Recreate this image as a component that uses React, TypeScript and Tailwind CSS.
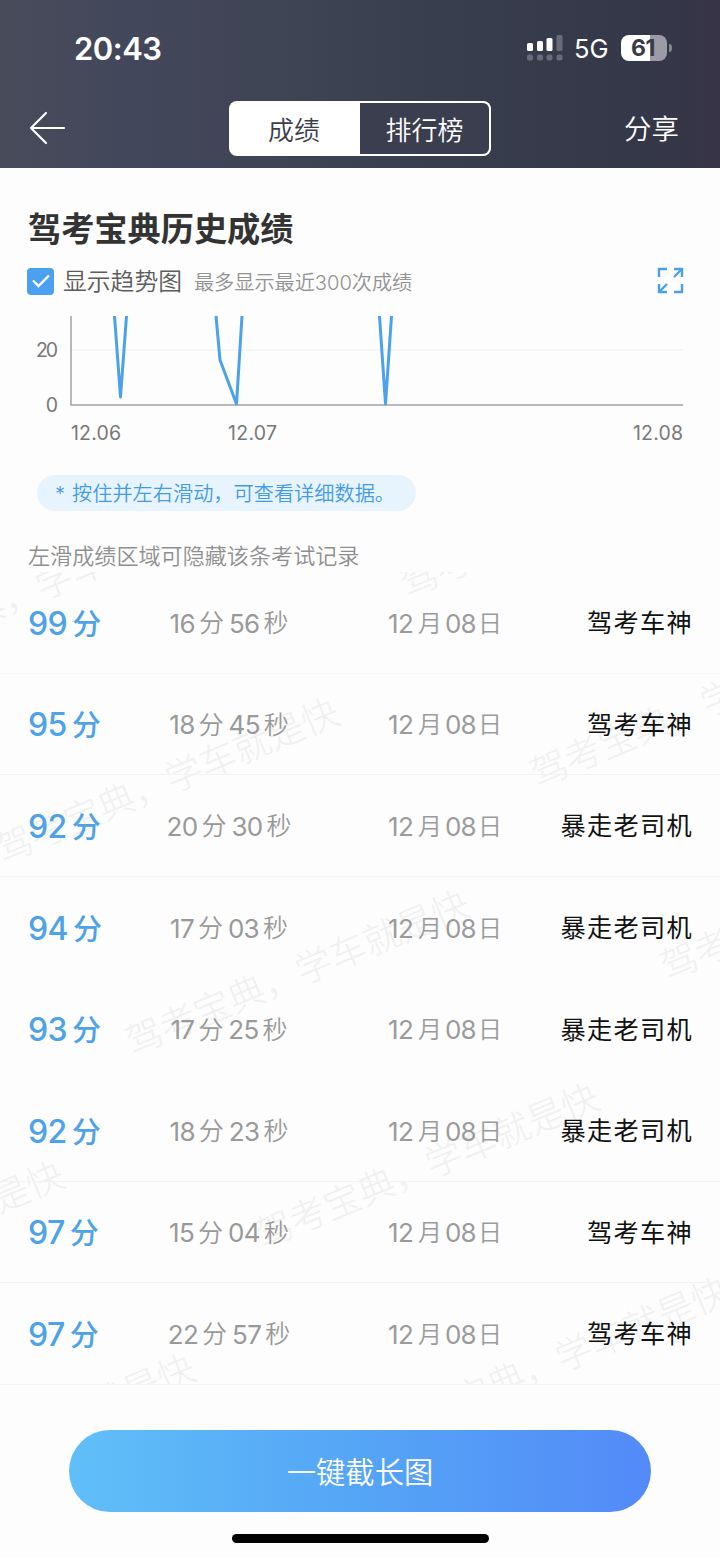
import React from "react";

const FONT = "font-[Inter,'Noto_Sans_CJK_SC',sans-serif]";

type Record = { score: string; min: string; sec: string; title: string; line: string };

const records: Record[] = [
  { score: "99", min: "16", sec: "56", title: "驾考车神", line: "border-[#f9f9f9]" },
  { score: "95", min: "18", sec: "45", title: "驾考车神", line: "border-[#f3f3f3]" },
  { score: "92", min: "20", sec: "30", title: "暴走老司机", line: "border-[#f3f3f3]" },
  { score: "94", min: "17", sec: "03", title: "暴走老司机", line: "border-transparent" },
  { score: "93", min: "17", sec: "25", title: "暴走老司机", line: "border-transparent" },
  { score: "92", min: "18", sec: "23", title: "暴走老司机", line: "border-[#f3f3f3]" },
  { score: "97", min: "15", sec: "04", title: "驾考车神", line: "border-[#f3f3f3]" },
  { score: "97", min: "22", sec: "57", title: "驾考车神", line: "border-[#f3f3f3]" },
];

// Centre of the first glyph of each watermark, relative to the list.
const watermarks = [
  { x: -116, y: 80 },
  { x: 14, y: 273 },
  { x: 144, y: 465 },
  { x: 274, y: 658 },
  { x: 404, y: 852 },
  { x: 419, y: 7 },
  { x: 549, y: 197 },
  { x: 679, y: 390 },
  { x: -261, y: 736 },
  { x: -130, y: 929 },
];

function StatusBar() {
  return (
    <div className="flex h-[96px] items-center justify-between pl-[74px] pr-[48px]">
      <div className="text-[31px] font-semibold leading-none tracking-[-0.5px]">20:43</div>
      <div className="flex items-center">
        <svg width="37" height="27" viewBox="0 0 37 27" fill="#fff">
          <rect x="1" y="8" width="6" height="8" rx="1.5" />
          <rect x="11" y="6" width="6" height="10" rx="1.5" />
          <rect x="20.5" y="3" width="6" height="13" rx="1.5" />
          <g opacity=".25">
            <rect x="30.500" y="0" width="6" height="16" rx="1.5" />
            <rect x="1" y="19.500" width="6" height="6" rx="2" />
            <rect x="11" y="19.500" width="6" height="6" rx="2" />
            <rect x="20.500" y="19.500" width="6" height="6" rx="2" />
            <rect x="30.500" y="19.500" width="6" height="6" rx="2" />
          </g>
        </svg>
        <span className="ml-[11px] w-[47px] pt-[2px] text-[25.500px] leading-none">5G</span>
        <div className="flex h-[26px] w-[46px] items-center justify-center rounded-[8px] bg-[linear-gradient(90deg,#fff_62%,#9c9aa6_62%)] pr-[2px] text-[23px] font-bold leading-none tracking-[-0.5px] text-[#373a49]">
          61
        </div>
        <div className="ml-[2px] h-[8px] w-[3px] rounded-r-full bg-[#85858f]" />
      </div>
    </div>
  );
}

function Header() {
  return (
    <header className="h-[168px] bg-[linear-gradient(90deg,#474b5a_0%,#43475b_18%,#3f4454_40%,#383d4d_65%,#343849_88%,#383448_100%)] text-white">
      <StatusBar />
      <div className="flex h-[65px] items-center pl-[29px] pr-[41px]">
        <svg className="-mt-[2px]" width="38" height="34" viewBox="0 0 38 34" fill="none" stroke="#fff" strokeWidth="2.2" strokeLinecap="round" strokeLinejoin="round">
          <path d="M17 2 L2 17 L17 32 M2 17 H35" />
        </svg>
        <div className="ml-[162px] flex h-[55px] w-[262px] overflow-hidden rounded-[8px] bg-white text-[26px] font-[350]">
          <div className="flex w-[131px] items-center justify-center pr-px pt-[3px] text-[#3c3e4a]">成绩</div>
          <div className="flex flex-1 items-center justify-center rounded-r-[8px] border-y-2 border-r-2 border-white bg-[#3a3e4e] pt-[3px]">排行榜</div>
        </div>
        <div className="ml-auto pt-[3px] text-[27.500px] font-[350] leading-none">分享</div>
      </div>
    </header>
  );
}

function Chart() {
  return (
    <svg className="block" width="720" height="142" viewBox="0 308 720 142" fill="none">
      <path d="M71 350H683" stroke="#f3f3f3" strokeWidth="1.500" />
      <path d="M71 316V405H683" stroke="#a2a2a2" strokeWidth="1.500" />
      <g stroke="#4ba1ea" strokeWidth="3" strokeLinejoin="round">
        <path d="M114.500 316L120.500 397L126.500 316" />
        <path d="M216 316L220 360L236.500 404L242 316" />
        <path d="M379.500 316L385.500 404L391.500 316" />
      </g>
      <g fill="#787878" fontSize="19.500">
        <text x="58" y="356.500" textAnchor="end" textLength="22">20</text>
        <text x="58" y="411.500" textAnchor="end" textLength="11.500">0</text>
        <text x="71" y="440" textLength="50">12.06</text>
        <text x="228" y="440" textLength="49">12.07</text>
        <text x="633" y="440" textLength="50">12.08</text>
      </g>
    </svg>
  );
}

function Row({ r }: { r: Record }) {
  return (
    <div className={`flex h-[101.6px] items-center border-b pl-[28px] pr-[29px] pt-[3px] ${r.line}`}>
      <div className="flex w-[110px] items-center text-[#4ea2e8]">
        <span className="text-[32px] font-medium leading-none tracking-[-0.6px]">{r.score}</span>
        <span className="ml-[5px] pt-px text-[29px] font-medium leading-none">分</span>
      </div>
      <div className="flex w-[182px] items-center justify-center text-[26px] leading-none text-[#999]">
        <span className="tracking-[-0.7px]">{r.min}</span>
        <span className="ml-[4px] mr-[5px] text-[25px] font-[350]">分</span>
        <span className="tracking-[-0.7px]">{r.sec}</span>
        <span className="ml-[4px] text-[25px] font-[350]">秒</span>
      </div>
      <div className="ml-[68px] flex items-center text-[26px] leading-none text-[#9b9b9b]">
        <span className="w-[27px] tracking-[-0.7px]">12</span>
        <span className="ml-[3px] mr-[3px] w-[24px] text-[24px] font-[350]">月</span>
        <span className="w-[32px] tracking-[-0.9px]">08</span>
        <span className="ml-px w-[24px] text-[24px] font-[350]">日</span>
      </div>
      <div className="-mr-[2px] ml-auto text-[25.200px] leading-none tracking-[1.300px] text-[#111]">{r.title}</div>
    </div>
  );
}

export default function App() {
  return (
    <div className={`flex h-[1558px] w-[720px] flex-col overflow-hidden bg-[#fdfdfd] ${FONT}`}>
      <Header />
      <section className="flex h-[140px] flex-col">
        <h1 className="mt-[44px] pl-[28px] text-[33.200px] font-bold leading-[34px] text-[#333]">驾考宝典历史成绩</h1>
        <div className="mt-[15px] flex h-[40px] items-center pl-[27px] pr-[36px]">
          <div className="flex size-[27px] items-center justify-center rounded-[4px] bg-[#4ba0f0]">
            <svg width="18" height="14" viewBox="0 0 18 14" fill="none" stroke="#fff" strokeWidth="2.400">
              <path d="M1 6.500L6.500 12L17 1.500" />
            </svg>
          </div>
          <span className="ml-[9px] pt-[2px] text-[23.800px] font-[350] leading-none text-[#5c5c5c]">显示趋势图</span>
          <span className="ml-[12px] pt-[4px] text-[20.200px] font-[350] leading-none tracking-[-0.05px] text-[#929292]">最多显示最近300次成绩</span>
          <svg className="-mt-[2px] ml-auto" width="27" height="27" viewBox="0 0 27 27" fill="none" stroke="#4ba0ea" strokeWidth="2.400">
            <path d="M10 2H2V10M17 2H25V10M25 2L17 10M2 17V25H10M2 25L10 17M25 17V25H17" />
          </svg>
        </div>
      </section>
      <Chart />
      <div className="ml-[37px] mt-[25px] flex h-[36px] w-[379px] items-center rounded-full bg-[#e7f4fe] pl-[18px] pt-[2px] text-[20.200px] font-[350] leading-none text-[#439be6]">
        <span className="w-[17px]">*</span>
        <span>按住并左右滑动，可查看详细数据。</span>
      </div>
      <p className="mt-[33px] h-[28px] pl-[28px] text-[22.100px] font-[350] leading-[25px] text-[#8f8f8f]">左滑成绩区域可隐藏该条考试记录</p>
      <section className="relative h-[813px] shrink-0 overflow-hidden">
        {watermarks.map((w) => (
          <span
            key={`${w.x}:${w.y}`}
            className="absolute origin-[18px_18px] -rotate-[22.7deg] whitespace-nowrap text-[36.800px] font-light leading-[36px] text-[#f0f0f0]"
            style={{ left: w.x - 18, top: w.y - 18 }}
          >
            驾考宝典，学车就是快
          </span>
        ))}
        <div className="relative">
          {records.map((r, i) => (
            <Row key={i} r={r} />
          ))}
        </div>
      </section>
      <button className="ml-[69px] mt-[45px] flex h-[82px] w-[582px] shrink-0 items-center justify-center rounded-full bg-[linear-gradient(90deg,#60bff8,#55a5f6_50%,#538af8)] pt-[3px] text-[29.300px] font-[350] text-white">
        一键截长图
      </button>
      <div className="ml-[232px] mt-[22px] h-[9px] w-[257px] shrink-0 rounded-full bg-black" />
    </div>
  );
}
